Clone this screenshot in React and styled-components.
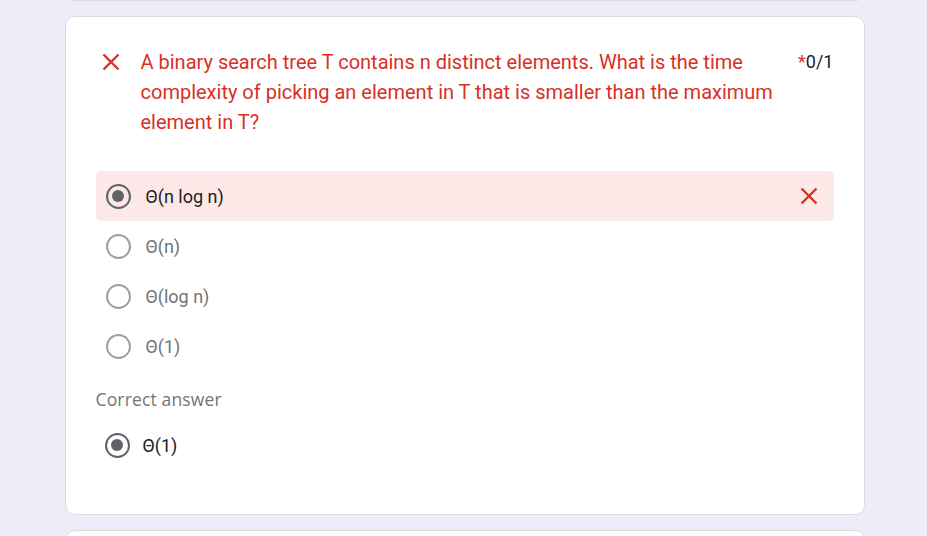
import styled, { createGlobalStyle } from "styled-components";

const GlobalStyle = createGlobalStyle`
  html, body {
    margin: 0;
    padding: 0;
    background: #f0ebf8;
    overflow: hidden;
  }
  body {
    font-family: Roboto, "Liberation Sans", Arial, sans-serif;
  }
`;

const Page = styled.main`
  display: flex;
  flex-direction: column;
  align-items: center;
  padding-left: 2px;
  height: 536px;
`;

const CardEdge = styled.div`
  width: 786px;
  height: 0;
  border-bottom: 1px solid #dadce0;
  margin-bottom: 15px;
`;

const Card = styled.section`
  box-sizing: border-box;
  width: 800px;
  flex-shrink: 0;
  background: #fff;
  border: 1px solid #dadce0;
  border-radius: 10px;
  padding: ${(p) => (p.$stub ? "0" : "30px 30px 44px")};
  height: ${(p) => (p.$stub ? "40px" : "auto")};
  margin-bottom: 15px;
`;

const Header = styled.div`
  display: flex;
  align-items: flex-start;
  margin-bottom: 34px;
`;

const IconBox = styled.span`
  flex: 0 0 30px;
  width: 30px;
  height: 30px;
  display: flex;
  align-items: center;
  justify-content: center;
  color: #d93025;
`;

const Question = styled.h2`
  flex: 1;
  margin: 0 0 0 15px;
  font-size: 20px;
  line-height: 30px;
  font-weight: 400;
  color: #d93025;
`;

const Score = styled.span`
  margin-left: 14px;
  font-size: 18px;
  line-height: 30px;
  color: #202124;
  white-space: nowrap;
`;

const Star = styled.span`
  color: #d93025;
`;

const Options = styled.div`
  display: flex;
  flex-direction: column;
`;

const Row = styled.label`
  display: flex;
  align-items: center;
  height: 50px;
  padding: 0 10px;
  border-radius: 5px;
  background: ${(p) => (p.$wrong ? "#fce8e6" : "transparent")};
`;

const Radio = styled.span`
  box-sizing: border-box;
  flex: 0 0 25px;
  width: 25px;
  height: 25px;
  border-radius: 50%;
  border: ${(p) => (p.$checked ? "2.5px solid #5f6368" : "2px solid #9aa0a6")};
  display: flex;
  align-items: center;
  justify-content: center;
  &::after {
    content: "";
    display: ${(p) => (p.$checked ? "block" : "none")};
    width: 12.5px;
    height: 12.5px;
    border-radius: 50%;
    background: #5f6368;
  }
`;

const OptionText = styled.span`
  flex: 1;
  margin-left: ${(p) => p.$gap || 15}px;
  font-size: 18px;
  color: ${(p) => (p.$checked ? "#202124" : "#70757a")};
`;

const Label = styled.div`
  margin: 18px 0 11px;
  font-family: "Open Sans", Roboto, sans-serif;
  font-size: 17.5px;
  line-height: 20px;
  font-weight: 500;
  letter-spacing: 0.15px;
  color: #70757a;
`;

const Cross = ({ size = 18 }) => (
  <svg width={size} height={size} viewBox="0 0 18 18" fill="none">
    <path d="M1.5 1.5 L16.5 16.5 M16.5 1.5 L1.5 16.5" stroke="currentColor" strokeWidth="2.4" />
  </svg>
);

const options = [
  { text: "Θ(n log n)", checked: true, wrong: true },
  { text: "Θ(n)" },
  { text: "Θ(log n)" },
  { text: "Θ(1)" },
];

export default function App() {
  return (
    <>
      <GlobalStyle />
      <Page>
        <CardEdge />
        <Card>
          <Header>
            <IconBox>
              <Cross />
            </IconBox>
            <Question>
              A binary search tree T contains n distinct elements. What is the
              time complexity of picking an element in T that is smaller than
              the maximum element in T?
            </Question>
            <Score>
              <Star>*</Star>0/1
            </Score>
          </Header>
          <Options>
            {options.map((o) => (
              <Row key={o.text} $wrong={o.wrong}>
                <Radio $checked={o.checked} />
                <OptionText $checked={o.checked}>{o.text}</OptionText>
                {o.wrong && (
                  <IconBox>
                    <Cross />
                  </IconBox>
                )}
              </Row>
            ))}
          </Options>
          <Label>Correct answer</Label>
          <Row as="div" style={{ paddingLeft: 9 }}>
            <Radio $checked />
            <OptionText $checked $gap={13}>
              Θ(1)
            </OptionText>
          </Row>
        </Card>
        <Card $stub />
      </Page>
    </>
  );
}
